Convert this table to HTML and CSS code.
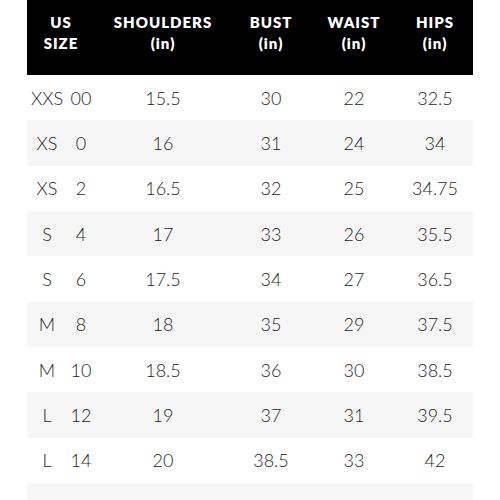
FILE: index.html
```html
<!DOCTYPE html>
<html>
<head>
<meta charset="utf-8">
<link rel="stylesheet" href="styles.css">
</head>
<body>
<div class="chart">
  <div class="row head">
    <div class="cell">US<br>SIZE</div>
    <div class="cell">SHOULDERS<br>(in)</div>
    <div class="cell">BUST<br>(in)</div>
    <div class="cell">WAIST<br>(in)</div>
    <div class="cell">HIPS<br>(in)</div>
  </div>
  <div class="row"><div class="cell size"><span>XXS</span><span>00</span></div><div class="cell">15.5</div><div class="cell">30</div><div class="cell">22</div><div class="cell">32.5</div></div>
  <div class="row alt"><div class="cell size"><span>XS</span><span>0</span></div><div class="cell">16</div><div class="cell">31</div><div class="cell">24</div><div class="cell">34</div></div>
  <div class="row"><div class="cell size"><span>XS</span><span>2</span></div><div class="cell">16.5</div><div class="cell">32</div><div class="cell">25</div><div class="cell">34.75</div></div>
  <div class="row alt"><div class="cell size"><span>S</span><span>4</span></div><div class="cell">17</div><div class="cell">33</div><div class="cell">26</div><div class="cell">35.5</div></div>
  <div class="row"><div class="cell size"><span>S</span><span>6</span></div><div class="cell">17.5</div><div class="cell">34</div><div class="cell">27</div><div class="cell">36.5</div></div>
  <div class="row alt"><div class="cell size"><span>M</span><span>8</span></div><div class="cell">18</div><div class="cell">35</div><div class="cell">29</div><div class="cell">37.5</div></div>
  <div class="row"><div class="cell size"><span>M</span><span>10</span></div><div class="cell">18.5</div><div class="cell">36</div><div class="cell">30</div><div class="cell">38.5</div></div>
  <div class="row alt"><div class="cell size"><span>L</span><span>12</span></div><div class="cell">19</div><div class="cell">37</div><div class="cell">31</div><div class="cell">39.5</div></div>
  <div class="row"><div class="cell size"><span>L</span><span>14</span></div><div class="cell">20</div><div class="cell">38.5</div><div class="cell">33</div><div class="cell">42</div></div>
  <div class="row alt"><div class="cell size"><span>XL</span><span>16</span></div><div class="cell">21</div><div class="cell">40</div><div class="cell">34.5</div><div class="cell">43.5</div></div>
</div>
</body>
</html>
```

FILE: styles.css
```css
html, body {
  margin: 0;
  padding: 0;
  background: #fff;
  overflow: hidden;
}
.chart {
  margin-left: 27px;
  width: 446px;
  font-family: "Lato", "Open Sans", sans-serif;
}
.row {
  display: grid;
  grid-template-columns: 68px 136px 80px 86px 76px;
  height: 45.33px;
  align-items: center;
  color: #1e1e1e;
  font-size: 18px;
  font-weight: 300;
  text-align: center;
}
.row.alt {
  background: #f6f6f6;
}
.row.head {
  height: 75px;
  background: #000;
  color: #fff;
  font-weight: 800;
  font-size: 15px;
  line-height: 21px;
  letter-spacing: 1px;
  align-items: start;
  padding-top: 12px;
  box-sizing: border-box;
}
.cell.size {
  display: grid;
  grid-template-columns: 40px 28px;
}
```
